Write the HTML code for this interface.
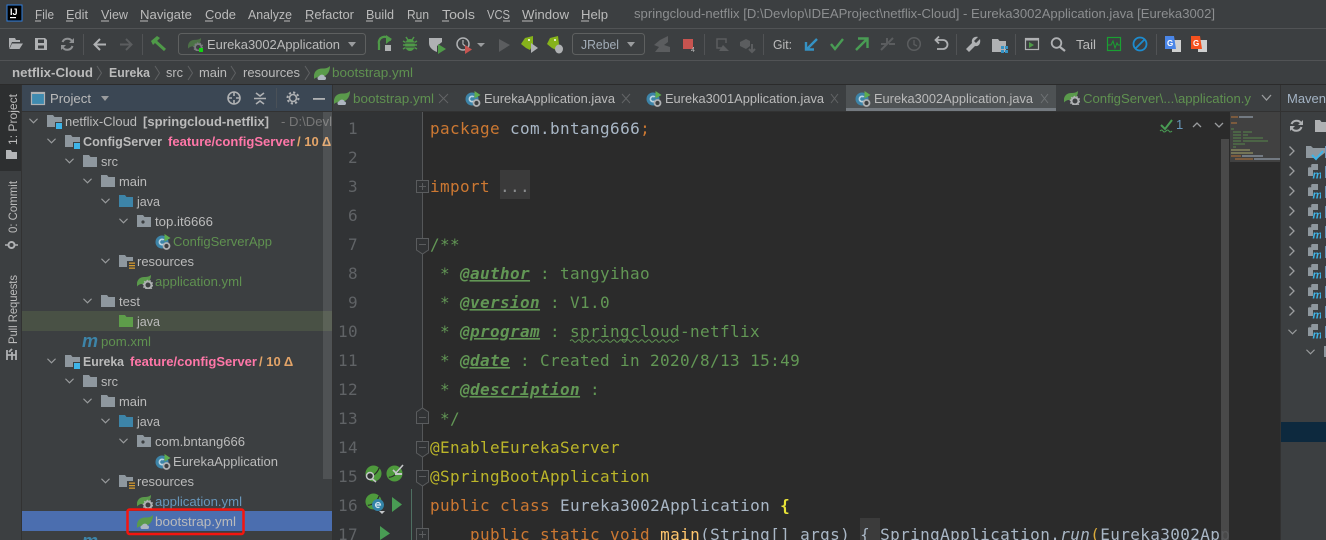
<!DOCTYPE html>
<html><head><meta charset="utf-8"><title>IDE</title>
<style>
html,body{margin:0;padding:0;background:#3c3f41;width:1326px;height:540px;overflow:hidden}
svg{display:block}
text{font-family:"Liberation Sans","DejaVu Sans",sans-serif;font-size:13px;fill:#bbbbbb;white-space:pre}
.b{font-weight:bold}
.g{fill:#5f9150}
.p{fill:#ff77a8;font-weight:bold}
.o{fill:#e3a468;font-weight:bold}
.m{font-family:"DejaVu Sans Mono","Liberation Mono",monospace;font-size:16px;letter-spacing:.37px}
.k{fill:#cc7832}.c{fill:#a9b7c6}.d{fill:#629755}.dt{fill:#629755;font-weight:bold;font-style:italic;text-decoration:underline}
.a{fill:#bbb529}.n{fill:#606366;font-family:"DejaVu Sans Mono",monospace;font-size:16px;letter-spacing:.37px}
.ch{fill:none;stroke:#9a9c9e;stroke-width:1.3}
.ic{fill:none;stroke:#afb1b3;stroke-width:1.6}
</style></head><body>
<svg width="1326" height="540" viewBox="0 0 1326 540" xmlns="http://www.w3.org/2000/svg">
<defs>
<symbol id="down" viewBox="0 0 10 6" overflow="visible"><path class="ch" d="M.5 .5L5 5L9.500 .5"/></symbol>
<symbol id="right" viewBox="0 0 6 10" overflow="visible"><path class="ch" d="M.5 .5L5 5L.5 9.500"/></symbol>
<symbol id="folder" viewBox="0 0 14 12"><path fill="#8e979e" d="M0 0H6L7.500 2H14V12H0Z"/></symbol>
<symbol id="bfolder" viewBox="0 0 14 12"><path fill="#3d84a8" d="M0 0H6L7.500 2H14V12H0Z"/></symbol>
<symbol id="gfolder" viewBox="0 0 14 12"><path fill="#5e9d4a" d="M0 0H6L7.500 2H14V12H0Z"/></symbol>
<symbol id="pkg" viewBox="0 0 14 12"><path fill="#8e979e" d="M0 0H6L7.500 2H14V12H0Z"/><circle cx="6" cy="7" r="1.600" fill="#3c3f41"/></symbol>
<symbol id="res" viewBox="0 0 16 14"><path fill="#8e979e" d="M0 0H6L7.500 2H14V6H8V12H0Z"/><path fill="#d69a2d" d="M10 7.500h6v1.200h-6zM10 10h6v1.200h-6zM10 12.500h6v1.200h-6z"/></symbol>
<symbol id="mod" viewBox="0 0 16 14"><path fill="#8e979e" d="M0 0H6L7.500 2H15V7H8V12H0Z"/><rect x="9" y="8" width="6" height="6" fill="#3db4e8"/></symbol>
<symbol id="leaf" viewBox="0 0 16 14"><path fill="#5a9a4b" d="M16 0C16 7 12 11 6 11C3 11 1 12 0 13C-1 6 3 2 9 2.500C12 2.500 14 2 16 0Z"/></symbol>
<symbol id="leafcloud" viewBox="0 0 16 14"><path fill="#5a9a4b" d="M16 0C16 7 12 11 6 11C3 11 1 12 0 13C-1 6 3 2 9 2.500C12 2.500 14 2 16 0Z"/><path fill="#aeb6c0" d="M5 14C3 14 3 10.500 5 10.500C6 8 10 8 10.500 10.500C12.500 10.500 12.500 14 10.500 14Z"/></symbol>
<symbol id="leafgear" viewBox="0 0 16 14"><path fill="#5a9a4b" d="M14 0C14 6 10 9 5 9C3 9 1 10 0 11.500C-1 5 3 1.500 8 2C10 2 12 1.500 14 0Z"/><circle cx="11" cy="10" r="3.500" fill="#3c3f41" stroke="#afb1b3" stroke-width="2"/><circle cx="11" cy="10" r="4.800" fill="none" stroke="#afb1b3" stroke-width="1" stroke-dasharray="1.500 1.500"/></symbol>
<symbol id="app" viewBox="0 0 16 16"><circle cx="7" cy="8" r="6.500" fill="#3d84a8"/><path fill="#b9d4e2" d="M9.500 5.500A3.500 3.500 0 1 0 9.500 10.500L8 9.500A1.800 1.800 0 1 1 8 6.500Z"/><path fill="#5fad4e" d="M9.500 0L15.500 4L9.500 7.500Z"/><circle cx="11.500" cy="12" r="3" fill="#3c3f41" stroke="#afb1b3" stroke-width="1.800"/></symbol>
<symbol id="mvn" viewBox="0 0 13 15"><path fill="#8e979e" d="M4 0H10V6H5V12H0V4Z"/><path fill="#3c3f41" d="M3.200 .8V3.200H.8Z"/><text x="4.500" y="14.500" style="font:italic bold 11px 'Liberation Sans',sans-serif;fill:#3db4e8">m</text></symbol>
<symbol id="sleaf" viewBox="0 0 18 18"><circle cx="9" cy="9" r="8.500" fill="#4e9a3c"/><path d="M3 13C7 13 13 9 15 3" stroke="#2b2b2b" stroke-width="1.300" fill="none"/></symbol>
<symbol id="plus" viewBox="0 0 13 13"><rect x=".5" y=".5" width="12" height="12" fill="#313335" stroke="#5a5c5e"/><path d="M3 6.500H10M6.500 3V10" stroke="#5a5c5e"/></symbol>
</defs>

<!-- base -->
<rect width="1326" height="540" fill="#3c3f41"/>
<rect y="28" width="1326" height="1" fill="#515355"/>
<rect y="60" width="1326" height="1" fill="#515355"/>
<rect y="84" width="1326" height="1" fill="#2b2b2b"/>

<!-- logo -->
<rect x="7" y="5" width="15" height="16" fill="#000" stroke="#2f7fe0" stroke-width="1"/>
<text x="10" y="15" style="font:bold 9px 'Liberation Sans',sans-serif;fill:#fff">IJ</text>
<rect x="10" y="17" width="6" height="1.200" fill="#fff"/>

<!-- menu -->
<text x="35" y="19" textLength="19" lengthAdjust="spacingAndGlyphs">File</text>
<text x="66" y="19" textLength="22" lengthAdjust="spacingAndGlyphs">Edit</text>
<text x="101" y="19" textLength="27" lengthAdjust="spacingAndGlyphs">View</text>
<text x="140" y="19" textLength="52" lengthAdjust="spacingAndGlyphs">Navigate</text>
<text x="205" y="19" textLength="31" lengthAdjust="spacingAndGlyphs">Code</text>
<text x="248" y="19" textLength="44" lengthAdjust="spacingAndGlyphs">Analyze</text>
<text x="305" y="19" textLength="49" lengthAdjust="spacingAndGlyphs">Refactor</text>
<text x="366" y="19" textLength="28" lengthAdjust="spacingAndGlyphs">Build</text>
<text x="407" y="19" textLength="22" lengthAdjust="spacingAndGlyphs">Run</text>
<text x="442" y="19" textLength="33" lengthAdjust="spacingAndGlyphs">Tools</text>
<text x="487" y="19" textLength="23" lengthAdjust="spacingAndGlyphs">VCS</text>
<text x="522" y="19" textLength="47" lengthAdjust="spacingAndGlyphs">Window</text>
<text x="581" y="19" textLength="27" lengthAdjust="spacingAndGlyphs">Help</text>
<path fill="#bbb" d="M35 20.500h6v1h-6zM66 20.500h7v1h-7zM101 20.500h8v1h-8zM140 20.500h8v1h-8zM205 20.500h8v1h-8zM284 20.500h6v1h-6zM305 20.500h7v1h-7zM366 20.500h7v1h-7zM415 20.500h7v1h-7zM442 20.500h7v1h-7zM503 20.500h7v1h-7zM522 20.500h11v1h-11zM581 20.500h8v1h-8z"/>
<text x="634" y="18" textLength="581" lengthAdjust="spacingAndGlyphs" style="fill:#8c8e90">springcloud-netflix [D:\Devlop\IDEAProject\netflix-Cloud] - Eureka3002Application.java [Eureka3002]</text>

<!-- toolbar -->
<path fill="#afb1b3" d="M9 38H15L16 40H20V42H12L9 49ZM12 43.500H23L19.500 49H9.500Z"/>
<path fill="#afb1b3" d="M35 38H45L47 40V50H35ZM38 39.500V43H44V39.500ZM38 45.500V48.500H44V45.500Z" fill-rule="evenodd"/>
<path fill="none" stroke="#8f9193" stroke-width="2" d="M72 41A5.500 5.500 0 0 0 62.500 42M62.500 47A5.500 5.500 0 0 0 72.500 46"/>
<path fill="#8f9193" d="M74 38V43H69ZM61 50V45H66Z"/>
<rect x="83" y="34" width="1" height="21" fill="#515355"/>
<path fill="none" stroke="#afb1b3" stroke-width="2" d="M106 44.500H95M100 39L94.500 44.500L100 50"/>
<path fill="none" stroke="#5b5d5f" stroke-width="2" d="M120 44.500H131M126 39L131.500 44.500L126 50"/>
<rect x="142" y="34" width="1" height="21" fill="#515355"/>
<path fill="none" stroke="#4f9a48" stroke-width="3" d="M155 41L165 50"/>
<path fill="#4f9a48" d="M151 41L157 36L160 38L153 45Z"/>
<rect x="178.500" y="33.500" width="187" height="21" rx="3" fill="none" stroke="#5e6060"/>
<use href="#leafgear" x="188" y="38" width="15" height="13" opacity=".55"/>
<rect x="199" y="48" width="4" height="4" fill="#12d312"/>
<text x="207" y="49" textLength="133" lengthAdjust="spacingAndGlyphs">Eureka3002Application</text>
<path fill="#9a9c9e" d="M348 42H356L352 47Z"/>
<path fill="none" stroke="#4f9a48" stroke-width="2.200" d="M379 50V44A5 5 0 0 1 390 41"/><path fill="#4f9a48" d="M386 35L392 39L386 44Z"/><rect x="385" y="45" width="6" height="6" fill="#afb1b3"/>
<ellipse cx="410" cy="45" rx="5" ry="6" fill="#4f9a48"/><path stroke="#4f9a48" stroke-width="1.500" d="M403 41L417 49M403 49L417 41M403 45H417M406 37L408 40M414 37L412 40"/><path stroke="#3c3f41" d="M405 43H415M405 47H415"/>
<path fill="#afb1b3" d="M429 38H442V42L437 46V52C432 50 429 47 429 43Z"/><path fill="#4f9a48" d="M438 44L446 49L438 54Z"/>
<circle cx="463" cy="44" r="6" fill="none" stroke="#afb1b3" stroke-width="1.500"/><path stroke="#afb1b3" stroke-width="1.300" d="M463 40V44L465 46"/><path fill="#c75450" d="M465 45L472 49.500L465 54Z"/>
<path fill="#9a9c9e" d="M477 43H485L481 47Z"/>
<path fill="#5b5d5f" d="M499 39L510 45L499 52Z"/>
<path fill="#86b31b" d="M533 36L525 38L521 44L526 48L530 50L533 44Z"/><circle cx="529" cy="40" r="1" fill="#fff"/><path fill="#afb1b3" d="M531 43L538 48L531 53Z"/>
<path fill="#86b31b" d="M558 36L550 38L547 44L552 48L556 50L559 44Z"/><circle cx="555" cy="40" r="1" fill="#fff"/><ellipse cx="559" cy="49" rx="4" ry="4.500" fill="#afb1b3"/>
<rect x="572.500" y="33.500" width="72" height="21" rx="3" fill="none" stroke="#5e6060"/>
<text x="581" y="49" textLength="38" lengthAdjust="spacingAndGlyphs" style="fill:#a3adb8">JRebel</text>
<path fill="#9a9c9e" d="M627 42H635L631 47Z"/>
<path fill="#5b5d5f" d="M668 36L660 40L654 45L659 47L655 52H670V47L664 45L668 42Z"/>
<rect x="683" y="39" width="10" height="10" fill="#c75450"/><text x="691" y="52" style="font-size:7px;fill:#bbb">4</text>
<rect x="704" y="34" width="1" height="21" fill="#515355"/>
<path fill="none" stroke="#5b5d5f" stroke-width="1.500" d="M723 48H717V39H726V43"/><path fill="#5b5d5f" d="M719 51L723 45L729 51Z"/>
<path fill="#5b5d5f" d="M740 42L746 39L750 41V46L746 49L740 46Z"/><path stroke="#5b5d5f" stroke-width="2" fill="none" d="M752 44V52M749 49L752 52L755 49"/>
<rect x="763" y="34" width="1" height="21" fill="#515355"/>
<text x="773" y="49" textLength="19" lengthAdjust="spacingAndGlyphs">Git:</text>
<path fill="none" stroke="#3592c4" stroke-width="2.400" d="M817 39L807 49M806 42V49.500H814"/>
<path fill="none" stroke="#499c54" stroke-width="2.400" d="M831 44L835 49L843 39"/>
<path fill="none" stroke="#499c54" stroke-width="2.400" d="M856 50L867 39M858 38.500H867.500V48"/>
<path fill="none" stroke="#5b5d5f" stroke-width="2" d="M893 38L887 44M881 50L887 44M881 44H887M887 38V44M889 44H895"/>
<circle cx="914" cy="44" r="6.300" fill="none" stroke="#5b5d5f" stroke-width="1.500"/><path stroke="#5b5d5f" stroke-width="1.300" fill="none" d="M914 40V44.500L917 46"/>
<path fill="none" stroke="#afb1b3" stroke-width="1.800" d="M936 40H943A4.500 4.500 0 0 1 943 49H937M939 36.500L935.500 40L939 43.500"/>
<rect x="956" y="34" width="1" height="21" fill="#515355"/>
<path fill="#afb1b3" d="M980 39L976 43L974 41L978 37C974 36 971 39 972 43L966 49L969 52L975 46C979 47 981 43 980 39Z"/>
<path fill="#afb1b3" d="M992 39H998L999.500 41H1006V52H992Z"/><path fill="#3592c4" d="M1001 46h3v3h-3zM1005 46h3v3h-3zM1001 50h3v3h-3zM1005 50h3v3h-3z"/>
<rect x="1015" y="34" width="1" height="21" fill="#515355"/>
<rect x="1025.500" y="38.500" width="13" height="11" fill="none" stroke="#afb1b3" stroke-width="1.200"/><rect x="1025" y="38" width="14" height="2.500" fill="#afb1b3"/><path fill="#4f9a48" d="M1029 42L1034 45L1029 48Z"/>
<circle cx="1056.500" cy="43" r="4.800" fill="none" stroke="#afb1b3" stroke-width="1.800"/><path stroke="#afb1b3" stroke-width="2.200" d="M1060 47L1065 51"/>
<text x="1076" y="49" textLength="20" lengthAdjust="spacingAndGlyphs">Tail</text>
<rect x="1107.500" y="37.500" width="13" height="13" fill="none" stroke="#1aa032" stroke-width="1.200"/><path fill="none" stroke="#1aa032" d="M1108 45H1111L1113 41L1115 48L1117 43L1118 45H1120"/>
<circle cx="1140" cy="44" r="6.500" fill="none" stroke="#1d8ccf" stroke-width="1.800"/><path stroke="#1d8ccf" stroke-width="1.800" d="M1144.500 39.500L1135.500 48.500"/>
<rect x="1156" y="34" width="1" height="21" fill="#515355"/>
<rect x="1172" y="40" width="9" height="12" fill="#cfd0d0"/><path fill="#4a86e8" d="M1165 36H1174L1176 49H1165Z"/><text x="1167" y="46" style="font:bold 8px 'Liberation Sans',sans-serif;fill:#fff">G</text>
<rect x="1198" y="40" width="9" height="12" fill="#cfd0d0"/><path fill="#f4511e" d="M1191 36H1200L1202 49H1191Z"/><text x="1193" y="46" style="font:bold 8px 'Liberation Sans',sans-serif;fill:#fff">G</text>

<!-- breadcrumbs -->
<text x="12" y="77" textLength="81" lengthAdjust="spacingAndGlyphs" class="b">netflix-Cloud</text>
<text x="109" y="77" textLength="41" lengthAdjust="spacingAndGlyphs" class="b">Eureka</text>
<text x="166" y="77" textLength="17" lengthAdjust="spacingAndGlyphs">src</text>
<text x="199" y="77" textLength="28" lengthAdjust="spacingAndGlyphs">main</text>
<text x="243" y="77" textLength="57" lengthAdjust="spacingAndGlyphs">resources</text>
<use href="#leafcloud" x="314" y="66" width="16" height="14"/>
<text x="332" y="77" textLength="81" lengthAdjust="spacingAndGlyphs" class="g">bootstrap.yml</text>
<path fill="none" stroke="#5f6163" d="M97 66L101.500 73L97 80M155 66L159.500 73L155 80M188 66L192.500 73L188 80M231 66L235.500 73L231 80M305 66L309.500 73L305 80"/>

<!-- left strip -->
<rect x="0" y="85" width="22" height="455" fill="#3c3f41"/>
<rect x="0" y="85" width="21" height="86" fill="#2d2f30"/>
<rect x="21" y="85" width="1" height="455" fill="#323232"/>
<text transform="translate(17,145) rotate(-90)" textLength="51" lengthAdjust="spacingAndGlyphs" style="font-size:12px">1: Project</text>
<path fill="#b3b5b7" d="M6 150H11L12 152H17V159H6Z"/>
<text transform="translate(17,233) rotate(-90)" textLength="52" lengthAdjust="spacingAndGlyphs" style="font-size:12px">0: Commit</text>
<circle cx="11.500" cy="245" r="3" fill="none" stroke="#afb1b3" stroke-width="2"/><path stroke="#afb1b3" stroke-width="1.600" d="M5 245H8M15 245H18"/>
<text transform="translate(17,344) rotate(-90)" textLength="69" lengthAdjust="spacingAndGlyphs" style="font-size:12px">Pull Requests</text>
<path fill="none" stroke="#afb1b3" stroke-width="1.800" d="M7 360V350M12 360V352M16 360V350M7 355H16M12 349L9 352"/>

<!-- project panel -->
<rect x="22" y="85" width="311" height="26" fill="#3b4754"/>
<rect x="22" y="111" width="311" height="1" fill="#323232"/>
<rect x="31.500" y="92.500" width="13" height="12" fill="#3f8bb0" stroke="#afb1b3" stroke-width="1.200"/>
<rect x="31" y="92" width="14" height="2" fill="#afb1b3"/>
<text x="50" y="103" textLength="41" lengthAdjust="spacingAndGlyphs">Project</text>
<path fill="#9a9c9e" d="M101 96H109L105 101Z"/>
<circle cx="234" cy="98" r="6" class="ic"/><path class="ic" d="M234 92V96M234 100V104M228 98H232M236 98H240"/>
<path class="ic" d="M254 98.500H266M256 93L260 96L264 93M256 104L260 101L264 104"/>
<rect x="276" y="88" width="1" height="20" fill="#4a5158"/>
<circle cx="293" cy="98" r="3.500" class="ic" stroke-width="2.500"/><circle cx="293" cy="98" r="5.500" fill="none" stroke="#afb1b3" stroke-width="2" stroke-dasharray="2.200 2.100"/>
<rect x="313" y="98" width="12" height="1.800" fill="#afb1b3"/>

<!-- tree rows -->
<rect x="22" y="311" width="311" height="20" fill="#495145"/>
<rect x="22" y="511" width="311" height="20" fill="#4b6eaf"/>
<use href="#down" x="29" y="118" width="9" height="6"/><use href="#mod" x="47" y="115" width="16" height="14"/>
<text x="65" y="126" textLength="72" lengthAdjust="spacingAndGlyphs">netflix-Cloud</text>
<text x="143" y="126" textLength="126" lengthAdjust="spacingAndGlyphs" class="b">[springcloud-netflix]</text>
<text x="281" y="126" textLength="51" lengthAdjust="spacingAndGlyphs" style="fill:#787878">- D:\Devl</text>
<use href="#down" x="47" y="138" width="9" height="6"/><use href="#mod" x="65" y="135" width="16" height="14"/>
<text x="83" y="146" textLength="79" lengthAdjust="spacingAndGlyphs" class="b">ConfigServer</text>
<text x="168" y="146" textLength="127" lengthAdjust="spacingAndGlyphs" class="p">feature/configServer</text>
<text x="297" y="146" class="o">/ 10 Δ</text>
<use href="#down" x="65" y="158" width="9" height="6"/><use href="#folder" x="83" y="155" width="14" height="12"/><text x="101" y="166" textLength="17" lengthAdjust="spacingAndGlyphs">src</text>
<use href="#down" x="83" y="178" width="9" height="6"/><use href="#folder" x="101" y="175" width="14" height="12"/><text x="119" y="186" textLength="28" lengthAdjust="spacingAndGlyphs">main</text>
<use href="#down" x="101" y="198" width="9" height="6"/><use href="#bfolder" x="119" y="195" width="14" height="12"/><text x="137" y="206" textLength="23" lengthAdjust="spacingAndGlyphs">java</text>
<use href="#down" x="119" y="218" width="9" height="6"/><use href="#pkg" x="137" y="215" width="14" height="12"/><text x="155" y="226" textLength="58" lengthAdjust="spacingAndGlyphs">top.it6666</text>
<use href="#app" x="155" y="234" width="16" height="16"/><text x="173" y="246" textLength="99" lengthAdjust="spacingAndGlyphs" class="g">ConfigServerApp</text>
<use href="#down" x="101" y="258" width="9" height="6"/><use href="#res" x="119" y="255" width="16" height="14"/><text x="137" y="266" textLength="57" lengthAdjust="spacingAndGlyphs">resources</text>
<use href="#leafgear" x="137" y="275" width="16" height="14"/><text x="155" y="286" textLength="87" lengthAdjust="spacingAndGlyphs" class="g">application.yml</text>
<use href="#down" x="83" y="298" width="9" height="6"/><use href="#folder" x="101" y="295" width="14" height="12"/><text x="119" y="306" textLength="21" lengthAdjust="spacingAndGlyphs">test</text>
<use href="#gfolder" x="119" y="315" width="14" height="12"/><text x="137" y="326" textLength="23" lengthAdjust="spacingAndGlyphs">java</text>
<text x="82" y="347" style="font:italic bold 18px 'Liberation Sans',sans-serif;fill:#3d84a8">m</text><text x="101" y="346" textLength="50" lengthAdjust="spacingAndGlyphs" class="g">pom.xml</text>
<use href="#down" x="47" y="358" width="9" height="6"/><use href="#mod" x="65" y="355" width="16" height="14"/>
<text x="83" y="366" textLength="41" lengthAdjust="spacingAndGlyphs" class="b">Eureka</text>
<text x="130" y="366" textLength="127" lengthAdjust="spacingAndGlyphs" class="p">feature/configServer</text>
<text x="259" y="366" class="o">/ 10 Δ</text>
<use href="#down" x="65" y="378" width="9" height="6"/><use href="#folder" x="83" y="375" width="14" height="12"/><text x="101" y="386" textLength="17" lengthAdjust="spacingAndGlyphs">src</text>
<use href="#down" x="83" y="398" width="9" height="6"/><use href="#folder" x="101" y="395" width="14" height="12"/><text x="119" y="406" textLength="28" lengthAdjust="spacingAndGlyphs">main</text>
<use href="#down" x="101" y="418" width="9" height="6"/><use href="#bfolder" x="119" y="415" width="14" height="12"/><text x="137" y="426" textLength="23" lengthAdjust="spacingAndGlyphs">java</text>
<use href="#down" x="119" y="438" width="9" height="6"/><use href="#pkg" x="137" y="435" width="14" height="12"/><text x="155" y="446" textLength="90" lengthAdjust="spacingAndGlyphs">com.bntang666</text>
<use href="#app" x="155" y="454" width="16" height="16"/><text x="173" y="466" textLength="105" lengthAdjust="spacingAndGlyphs">EurekaApplication</text>
<use href="#down" x="101" y="478" width="9" height="6"/><use href="#res" x="119" y="475" width="16" height="14"/><text x="137" y="486" textLength="57" lengthAdjust="spacingAndGlyphs">resources</text>
<use href="#leafgear" x="137" y="495" width="16" height="14"/><text x="155" y="506" textLength="87" lengthAdjust="spacingAndGlyphs" style="fill:#6897bb">application.yml</text>
<use href="#leafcloud" x="137" y="515" width="16" height="14"/><text x="155" y="526" textLength="81" lengthAdjust="spacingAndGlyphs">bootstrap.yml</text>
<text x="82" y="547" style="font:italic bold 18px 'Liberation Sans',sans-serif;fill:#3d84a8">m</text>
<rect x="127.500" y="509.500" width="116" height="24.500" rx="2" fill="none" stroke="#f5150f" stroke-width="2.500"/>
<rect x="323" y="112" width="9" height="367" fill="#ffffff" fill-opacity=".1"/>
<rect x="332" y="85" width="1" height="455" fill="#323232"/>

<!-- tabs -->
<rect x="333" y="85" width="948" height="26" fill="#3c3f41"/>
<rect x="846" y="85" width="210" height="23" fill="#4e5254"/>
<rect x="846" y="108" width="210" height="3" fill="#747a80"/>
<rect x="333" y="111" width="993" height="1" fill="#323232"/>
<use href="#leafcloud" x="334" y="91" width="16" height="14"/><text x="353" y="103" textLength="81" lengthAdjust="spacingAndGlyphs" class="g">bootstrap.yml</text>
<use href="#app" x="465" y="91" width="16" height="16"/><text x="484" y="103" textLength="131" lengthAdjust="spacingAndGlyphs">EurekaApplication.java</text>
<use href="#app" x="646" y="91" width="16" height="16"/><text x="665" y="103" textLength="159" lengthAdjust="spacingAndGlyphs">Eureka3001Application.java</text>
<use href="#app" x="855" y="91" width="16" height="16"/><text x="874" y="103" textLength="159" lengthAdjust="spacingAndGlyphs">Eureka3002Application.java</text>
<use href="#leafgear" x="1064" y="91" width="16" height="14"/><text x="1083" y="103" textLength="168" lengthAdjust="spacingAndGlyphs" class="g">ConfigServer\...\application.y</text>
<path stroke="#626466" stroke-width="1" d="M439 94L448 103M448 94L439 103M622 94L630 103M630 94L622 103M831 94L838 103M838 94L831 103"/>
<path stroke="#6e7274" stroke-width="1" d="M1041 94L1048 103M1048 94L1041 103"/>
<path class="ch" stroke-width="1.600" d="M1262 95L1266.500 100L1271 95"/>

<!-- maven panel -->
<rect x="1280" y="85" width="1" height="455" fill="#323232"/>
<text x="1287" y="103" textLength="39" lengthAdjust="spacingAndGlyphs" style="fill:#a3b3c4">Maven</text>
<path fill="none" stroke="#afb1b3" stroke-width="2" d="M1301 123A5.500 5.500 0 0 0 1291.500 124M1291.500 128A5.500 5.500 0 0 0 1301.500 127"/>
<path fill="#afb1b3" d="M1303 120V125H1298ZM1290 131V126H1295Z"/>
<path fill="#afb1b3" d="M1315 120H1320L1321.500 122H1326V132H1315Z"/>
<rect x="1281" y="422" width="45" height="20" fill="#0d293e"/>
<use href="#right" x="1289" y="146" width="6" height="10"/>
<path fill="#8e979e" d="M1306 146H1311L1313 148H1326V152L1318 158H1306Z"/><path fill="none" stroke="#3db4e8" stroke-width="2" d="M1312 155L1316 159L1323 151"/>
<use href="#right" x="1289" y="166" width="6" height="10"/><use href="#mvn" x="1308" y="164" width="13" height="15"/>
<use href="#right" x="1289" y="186" width="6" height="10"/><use href="#mvn" x="1308" y="184" width="13" height="15"/>
<use href="#right" x="1289" y="206" width="6" height="10"/><use href="#mvn" x="1308" y="204" width="13" height="15"/>
<use href="#right" x="1289" y="226" width="6" height="10"/><use href="#mvn" x="1308" y="224" width="13" height="15"/>
<use href="#right" x="1289" y="246" width="6" height="10"/><use href="#mvn" x="1308" y="244" width="13" height="15"/>
<use href="#right" x="1289" y="266" width="6" height="10"/><use href="#mvn" x="1308" y="264" width="13" height="15"/>
<use href="#right" x="1289" y="286" width="6" height="10"/><use href="#mvn" x="1308" y="284" width="13" height="15"/>
<use href="#right" x="1289" y="306" width="6" height="10"/><use href="#mvn" x="1308" y="304" width="13" height="15"/>
<use href="#down" x="1288" y="329" width="9" height="6"/><use href="#mvn" x="1308" y="324" width="13" height="15"/>
<use href="#down" x="1306" y="349" width="9" height="6"/><rect x="1324" y="346" width="2" height="11" fill="#8e979e"/>
<path fill="#6897bb" d="M1325 146h1v12h-1zM1325 166h1v12h-1zM1325 186h1v12h-1zM1325 206h1v12h-1zM1325 226h1v12h-1zM1325 246h1v12h-1zM1325 266h1v12h-1zM1325 286h1v12h-1zM1325 306h1v12h-1zM1325 326h1v12h-1z"/>

<!-- editor -->
<rect x="333" y="112" width="947" height="428" fill="#2b2b2b"/>
<rect x="333" y="112" width="89" height="428" fill="#313335"/>
<rect x="422" y="112" width="1" height="428" fill="#555759"/>
<rect x="411" y="489" width="1" height="51" fill="#4e6f62"/>
<rect x="500" y="170" width="30" height="29" fill="#3a3a3a"/>
<rect x="860" y="518" width="20" height="22" fill="#3b3b3b"/>

<!-- line numbers -->
<text class="n" x="348" y="134">1</text><text class="n" x="348" y="163">2</text><text class="n" x="348" y="192">3</text><text class="n" x="348" y="221">6</text><text class="n" x="348" y="250">7</text><text class="n" x="348" y="279">8</text><text class="n" x="348" y="308">9</text><text class="n" x="338" y="337">10</text><text class="n" x="338" y="366">11</text><text class="n" x="338" y="395">12</text><text class="n" x="338" y="424">13</text><text class="n" x="338" y="453">14</text><text class="n" x="338" y="482">15</text><text class="n" x="338" y="511">16</text><text class="n" x="338" y="540">17</text>

<!-- fold markers -->
<use href="#plus" x="416" y="180" width="13" height="13"/>
<path fill="#313335" stroke="#5a5c5e" d="M416.500 238.500H428.500V250L422.500 254L416.500 250Z"/><path stroke="#5a5c5e" d="M419 244.500H426"/>
<path fill="#313335" stroke="#5a5c5e" d="M416.500 423.500H428.500V412L422.500 408L416.500 412Z"/><path stroke="#5a5c5e" d="M419 417.500H426"/>
<path fill="#313335" stroke="#5a5c5e" d="M416.500 441.500H428.500V453L422.500 457L416.500 453Z"/><path stroke="#5a5c5e" d="M419 447.500H426"/>
<path fill="#313335" stroke="#5a5c5e" d="M416.500 470.500H428.500V482L422.500 486L416.500 482Z"/><path stroke="#5a5c5e" d="M419 476.500H426"/>
<use href="#plus" x="416" y="528" width="13" height="13"/>

<!-- gutter icons -->
<use href="#sleaf" x="365" y="465" width="17" height="17"/>
<circle cx="370" cy="476" r="3.500" fill="#313335" stroke="#c5c7c9" stroke-width="1.500"/><path stroke="#c5c7c9" stroke-width="1.500" d="M372.500 479L376 482"/>
<use href="#sleaf" x="386" y="465" width="17" height="17"/>
<path fill="none" stroke="#c5c7c9" stroke-width="1.600" d="M393 470L396 473L403 465"/><path stroke="#c5c7c9" stroke-width="2" d="M395 474H402"/>
<use href="#sleaf" x="365" y="493" width="17" height="17"/>
<circle cx="378" cy="505" r="6" fill="#3383a8"/><path fill="none" stroke="#d5e5ee" stroke-width="1.200" d="M375.500 505H380.500A2.500 2.500 0 1 0 379.500 507"/>
<path fill="#c5c7c9" d="M379 511H385L382 514Z"/>
<path fill="#499c54" d="M392 497L402 504.500L392 512Z"/>
<path fill="#499c54" d="M380 526L390 533.500L380 540Z"/>

<!-- code -->
<text class="m c" x="430" y="134"><tspan class="k">package</tspan> com.bntang666<tspan class="k">;</tspan></text>
<text class="m k" x="430" y="192">import</text>
<text class="m" x="500" y="192" style="fill:#8a8c8e">...</text>
<text class="m d" x="430" y="250">/**</text>
<text class="m d" x="440" y="279">*</text><text class="m dt" x="460" y="279">@author</text><text class="m d" x="540" y="279">: tangyihao</text>
<text class="m d" x="440" y="308">*</text><text class="m dt" x="460" y="308">@version</text><text class="m d" x="550" y="308">: V1.0</text>
<text class="m d" x="440" y="337">*</text><text class="m dt" x="460" y="337">@program</text><text class="m d" x="550" y="337">: springcloud-netflix</text>
<path fill="none" stroke="#629755" d="M570 341q2 -2.500 3.500 0t3.500 0t3.500 0t3.500 0t3.500 0t3.500 0t3.500 0t3.500 0t3.500 0t3.500 0t3.500 0t3.500 0t3.500 0t3.500 0t3.500 0t3.500 0t3.500 0t3.500 0t3.500 0t3.500 0t3.500 0t3.500 0t3.500 0t3.500 0t3.500 0t3.500 0t3.500 0t3.500 0t3.500 0t3.500 0t3.500 0"/>
<text class="m d" x="440" y="366">*</text><text class="m dt" x="460" y="366">@date</text><text class="m d" x="520" y="366">: Created in 2020/8/13 15:49</text>
<text class="m d" x="440" y="395">*</text><text class="m dt" x="460" y="395">@description</text><text class="m d" x="590" y="395">:</text>
<text class="m d" x="440" y="424">*/</text>
<text class="m a" x="430" y="453">@EnableEurekaServer</text>
<text class="m a" x="430" y="482">@SpringBootApplication</text>
<text class="m c" x="430" y="511"><tspan class="k">public class</tspan> Eureka3002Application <tspan style="fill:#e8e337;font-weight:bold">{</tspan></text>
<text class="m c" x="470" y="540"><tspan class="k">public static void</tspan> <tspan style="fill:#ffc66d">main</tspan>(String[] args) { SpringApplication.<tspan style="font-style:italic">run</tspan><tspan style="fill:#d8a93a">(</tspan>Eureka3002App</text>

<!-- editor inspection -->
<path fill="none" stroke="#499c54" stroke-width="2" d="M1161 125L1165 129L1172 120"/><path fill="none" stroke="#499c54" d="M1160 131q2 -2 3 0t3 0t3 0t3 0"/>
<text x="1176" y="129" style="fill:#6897bb;font-size:13px">1</text>
<path class="ch" stroke-width="1.500" d="M1193 127L1197 123L1201 127M1215 123L1219 127L1223 123"/>

<!-- editor scrollbar + minimap -->
<rect x="1230" y="112" width="50" height="50" fill="#414141"/>
<g opacity=".85">
<rect x="1231" y="116" width="7" height="2" fill="#87603e"/><rect x="1239" y="116" width="14" height="2" fill="#7c858e"/>
<rect x="1231" y="122" width="6" height="2" fill="#87603e"/>
<rect x="1231" y="128" width="3" height="2" fill="#4e6b48"/>
<path fill="#4e6b48" d="M1233 131h8v2h-8zM1243 131h9v2h-9zM1233 134h8v2h-8zM1243 134h5v2h-5zM1233 137h8v2h-8zM1243 137h20v2h-20zM1233 140h8v2h-8zM1243 140h25v2h-25zM1233 143h12v2h-12zM1233 146h3v2h-3z"/>
<rect x="1231" y="149" width="19" height="2" fill="#7d7d5a"/><rect x="1231" y="152" width="22" height="2" fill="#7d7d5a"/>
<rect x="1231" y="155" width="10" height="2" fill="#87603e"/><rect x="1242" y="155" width="21" height="2" fill="#7c858e"/>
<rect x="1235" y="158" width="18" height="2" fill="#87603e"/><rect x="1254" y="158" width="26" height="2" fill="#7c858e"/>
</g>
<rect x="1221" y="139" width="8" height="401" fill="#4d4d4d" fill-opacity=".9"/>
</svg>
</body></html>
